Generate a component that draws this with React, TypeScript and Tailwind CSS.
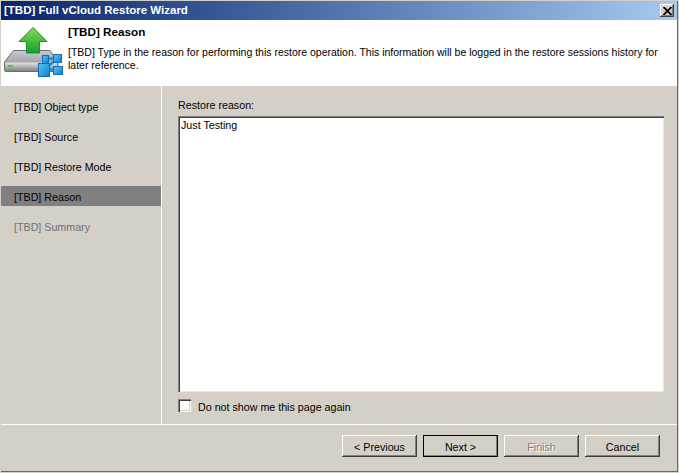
const STEPS = ["[TBD] Object type", "[TBD] Source", "[TBD] Restore Mode", "[TBD] Reason", "[TBD] Summary"]

const raised = "shadow-[inset_-1px_-1px_0_#404040,inset_1px_1px_0_#ffffff,inset_-2px_-2px_0_#808080]"

// drawn in page coordinates, so the viewBox starts where the header column starts
function WizardIcon() {
  return (
    <svg width="67" height="66" viewBox="1 20 67 66" className="block">
      <defs>
        <linearGradient id="drive-top" x1="0" y1="0" x2="0" y2="1">
          <stop offset="0" stopColor="#c9ccce" />
          <stop offset="1" stopColor="#858a8e" />
        </linearGradient>
        <linearGradient id="drive-front" x1="0" y1="0" x2="0" y2="1">
          <stop offset="0" stopColor="#e4e5e6" />
          <stop offset="1" stopColor="#7e8286" />
        </linearGradient>
        <linearGradient id="arrow" x1="0" y1="0" x2="0" y2="1">
          <stop offset="0" stopColor="#86dc52" />
          <stop offset="1" stopColor="#12a02c" />
        </linearGradient>
        <linearGradient id="node" x1="0" y1="0" x2="1" y2="1">
          <stop offset="0" stopColor="#5cc4f4" />
          <stop offset="1" stopColor="#0f7fc8" />
        </linearGradient>
      </defs>
      <path d="M13.5 50.5 H50 L58 62 V70 Q58 71.5 56 71.5 H6 Q4.5 71.5 4.5 70 V62 Z" fill="url(#drive-top)" stroke="#6a6f73" />
      <path d="M5 62.5 H57 V71 H5 Z" fill="url(#drive-front)" />
      <rect x="8" y="65" width="5" height="2" fill="#45c84a" />
      <path d="M33 27.5 L47 41.5 H39.5 V53 H26.5 V41.5 H19 Z" fill="url(#arrow)" stroke="#1a8f2c" />
      <path d="M45 59 L57 58 M45 59 L44 70 M45 69 L58 70 M46 68 L57 59" stroke="#1c8fd0" strokeWidth="2.5" fill="none" />
      <rect x="42.5" y="55.5" width="6" height="8" fill="url(#node)" stroke="#0f6fb0" />
      <rect x="53.5" y="54.5" width="8" height="8" fill="url(#node)" stroke="#0f6fb0" />
      <rect x="53.5" y="66.5" width="9" height="8" fill="url(#node)" stroke="#0f6fb0" />
      <rect x="38.5" y="63.5" width="11" height="13" fill="url(#node)" stroke="#0f6fb0" />
    </svg>
  )
}

function WizardButton({ label, disabled, primary }: { label: string; disabled?: boolean; primary?: boolean }) {
  return (
    <button
      className={`h-[22px] w-[75px] bg-[#d4d0c8] pt-[2px] ${raised} ${primary ? "outline outline-1 -outline-offset-1 outline-black" : ""} ${disabled ? "text-[#808080] [text-shadow:1px_1px_0_#ffffff]" : "text-black"}`}
    >
      {label}
    </button>
  )
}

export default function App() {
  return (
    <div className="h-[473px] w-[679px] overflow-hidden border border-[#d4d0c8] bg-[#d4d0c8] font-['Liberation_Sans',sans-serif] text-[10.7px] text-black">
      <div className="flex h-[471px] w-[677px] flex-col border-b border-r border-[#686868]">
        {/* Title bar */}
        <div className="flex h-[19px] shrink-0 items-center justify-between bg-gradient-to-r from-[#0a246a] to-[#a6caf0] pl-[3px] pr-[3px] text-[11.5px] font-bold text-white">
          <span>[TBD] Full vCloud Restore Wizard</span>
          <button className={`flex h-[13px] w-[14px] items-center justify-center bg-[#d4d0c8] ${raised}`}>
            <svg width="9" height="8" viewBox="0 0 9 8">
              <path d="M0.5 0 L8.5 8 M8.5 0 L0.5 8" stroke="#000" strokeWidth="1.8" />
            </svg>
          </button>
        </div>

        {/* Header */}
        <div className="flex h-[66px] shrink-0 bg-white">
          <div className="w-[67px] shrink-0">
            <WizardIcon />
          </div>
          <div className="pt-[5px]">
            <div className="text-[11.7px] font-bold leading-[14px]">[TBD] Reason</div>
            <p className="mt-[7px] whitespace-nowrap text-[10.5px] leading-[13px]">
              [TBD] Type in the reason for performing this restore operation. This information will be logged in the restore sessions history for
              <br />
              later reference.
            </p>
          </div>
        </div>

        {/* Body */}
        <div className="flex h-[339px] shrink-0 border-b border-white">
          <nav className="flex w-[161px] shrink-0 flex-col gap-[10px] border-r border-white pt-[10px]">
            {STEPS.map((step, i) => (
              <div
                key={step}
                className={`flex h-[20px] items-center pl-[13px] pt-[2px] ${i === 3 ? "bg-[#808080]" : ""} ${i === 4 ? "text-[#707070]" : ""}`}
              >
                {step}
              </div>
            ))}
          </nav>
          <div className="flex-1 pl-[16px] pt-[13px]">
            <label className="block leading-[13px]">Restore reason:</label>
            <div className="mt-[4px] h-[276px] w-[486px] bg-white pl-[3px] pt-[3px] leading-[13px] shadow-[inset_1px_1px_0_#808080,inset_2px_2px_0_#404040,inset_-1px_-1px_0_#ece9d8]">
              Just Testing
            </div>
            <div className="mt-[7px] flex items-start gap-[7px]">
              <span className="h-[13px] w-[13px] bg-white shadow-[inset_1px_1px_0_#808080,inset_2px_2px_0_#404040,inset_-1px_-1px_0_#ffffff,inset_-2px_-2px_0_#d4d0c8]" />
              <span>Do not show me this page again</span>
            </div>
          </div>
        </div>

        {/* Footer */}
        <div className="flex justify-end gap-[6px] pr-[17px] pt-[10px]">
          <WizardButton label="< Previous" />
          <WizardButton label="Next >" primary />
          <WizardButton label="Finish" disabled />
          <WizardButton label="Cancel" />
        </div>
      </div>
    </div>
  )
}
